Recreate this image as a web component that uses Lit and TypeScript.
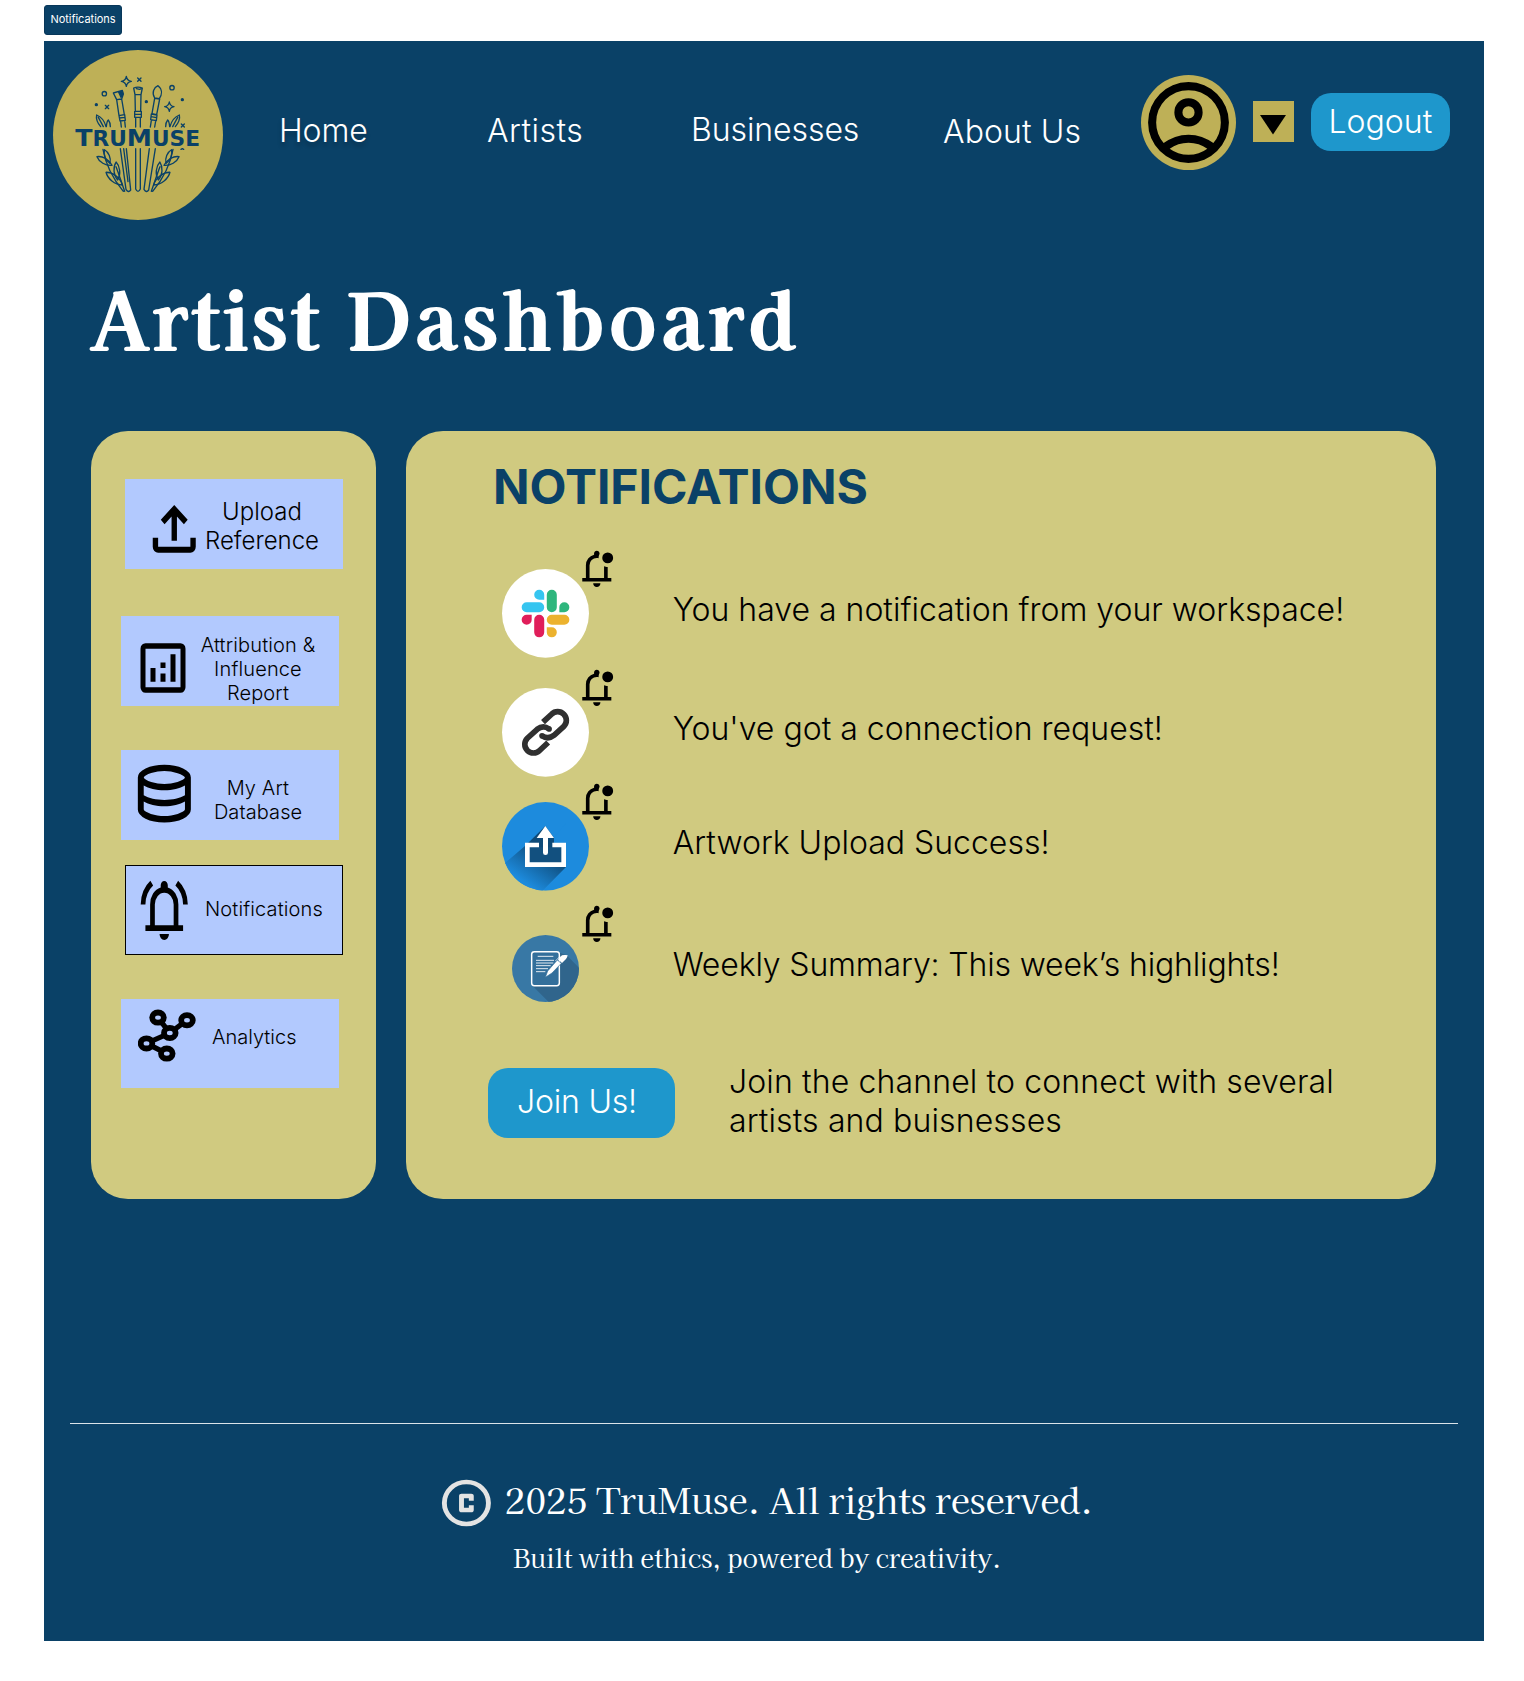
import { LitElement, html, css, svg } from "lit";
import { customElement } from "lit/decorators.js";

const PATHS: Record<string, string> = {
  account:
    "M234-276q51-39 114-61.5T480-360q69 0 132 22.5T726-276q35-41 54.5-93T800-480q0-133-93.5-226.5T480-800q-133 0-226.5 93.5T160-480q0 59 19.5 111t54.5 93Zm246-164q-59 0-99.5-40.5T340-580q0-59 40.5-99.5T480-720q59 0 99.5 40.5T620-580q0 59-40.5 99.5T480-440Zm0 360q-83 0-156-31.5T197-197q-54-54-85.5-127T80-480q0-83 31.5-156T197-763q54-54 127-85.5T480-880q83 0 156 31.5T763-763q54 54 85.5 127T880-480q0 83-31.5 156T763-197q-54 54-127 85.5T480-80Zm0-80q53 0 100-15.5t86-44.5q-39-29-86-44.5T480-280q-53 0-100 15.5T294-220q39 29 86 44.5T480-160Zm0-360q26 0 43-17t17-43q0-26-17-43t-43-17q-26 0-43 17t-17 43q0 26 17 43t43 17Z",
  upload:
    "M440-320v-326L336-542l-56-58 200-200 200 200-56 58-104-104v326h-80ZM240-160q-33 0-56.5-23.5T160-240v-120h80v120h480v-120h80v120q0 33-23.5 56.5T720-160H240Z",
  report:
    "M280-280h80v-200h-80v200Zm320 0h80v-400h-80v400Zm-160 0h80v-120h-80v120Zm0-200h80v-80h-80v80ZM200-120q-33 0-56.5-23.5T120-200v-560q0-33 23.5-56.5T200-840h560q33 0 56.5 23.5T840-760v560q0 33-23.5 56.5T760-120H200Zm0-80h560v-560H200v560Z",
  database:
    "M480-120q-151 0-255.5-46.5T120-280v-400q0-66 105.5-113T480-840q149 0 254.5 47T840-680v400q0 67-104.5 113.5T480-120Zm0-479q89 0 179-25.5T760-679q-11-29-100.5-55T480-760q-91 0-178.5 25.5T200-679q14 30 101.5 55T480-599Zm0 199q42 0 81-4t74.5-11.5q35.5-7.5 67-18.5t57.5-25v-120q-26 14-57.5 25t-67 18.5Q600-528 561-524t-81 4q-42 0-82-4t-75.5-11.5Q287-543 256-554t-56-25v120q25 14 56 25t66.5 18.5Q358-408 398-404t82 4Zm0 200q46 0 93.5-7t87.5-18.5q40-11.5 67-26t32-29.5v-98q-26 14-57.5 25t-67 18.5Q600-328 561-324t-81 4q-42 0-82-4t-75.5-11.5Q287-343 256-354t-56-25v99q5 15 31.5 29t66.5 25.5q40 11.5 88 18.5t94 7Z",
  bell:
    "M80-560q0-100 44.5-183.5T244-882l47 64q-60 44-95.5 111T160-560H80Zm720 0q0-80-35.5-147T669-818l47-64q75 55 119.5 138.5T880-560h-80ZM160-200v-80h80v-280q0-83 50-147.5T420-792v-28q0-25 17.5-42.5T480-880q25 0 42.5 17.5T540-820v28q80 20 130 84.5T720-560v280h80v80H160Zm320 120q-33 0-56.5-23.5T400-160h160q0 33-23.5 56.5T480-80ZM320-280h320v-280q0-66-47-113t-113-47q-66 0-113 47t-47 113v280Z",
  unread:
    "M160-200v-80h80v-280q0-83 50-147.5T420-792v-28q0-25 17.5-42.5T480-880q25 0 42.5 17.5T540-820v13q-11 22-16 45t-4 47q-10-2-19.5-3.5T480-720q-66 0-113 47t-47 113v280h320v-257q18 8 38.5 12.5T720-520v240h80v80H160Zm320 120q-33 0-56.5-23.5T400-160h160q0 33-23.5 56.5T480-80Zm240-520q-50 0-85-35t-35-85q0-50 35-85t85-35q50 0 85 35t35 85q0 50-35 85t-85 35Z",
  copyright:
    "M400-320h160q17 0 28.5-11.5T600-360v-80h-80v40h-80v-160h80v40h80v-80q0-17-11.5-28.5T560-640H400q-17 0-28.5 11.5T360-600v240q0 17 11.5 28.5T400-320Zm80 240q-83 0-156-31.5T197-197q-54-54-85.5-127T80-480q0-83 31.5-156T197-763q54-54 127-85.5T480-880q83 0 156 31.5T763-763q54 54 85.5 127T880-480q0 83-31.5 156T763-197q-54 54-127 85.5T480-80Zm0-80q134 0 227-93t93-227q0-134-93-227t-227-93q-134 0-227 93t-93 227q0 134 93 227t227 93Z",
};

const glyph = (name: string, cls: string) => html`
  <svg class=${cls} viewBox="0 -960 960 960" preserveAspectRatio="none" fill="currentColor">
    <path d=${PATHS[name]} />
  </svg>
`;

const NODES = [
  [158, 1017.6],
  [187, 1020.2],
  [169.8, 1033],
  [146.5, 1043.4],
  [166.8, 1053.6],
];

const network = html`
  <svg class="ico network" viewBox="138 1009 59 54" fill="none" stroke="#000">
    <path d="M158 1017.6L169.8 1033L187 1020.2M169.8 1033L146.5 1043.4L166.8 1053.6" stroke-width="5.2" />
    ${NODES.map(
      ([x, y]) => svg`<ellipse cx=${x} cy=${y} rx="5.8" ry="5.1" fill="#b2c9fe" stroke-width="5.8" />`
    )}
  </svg>
`;

// A slim leaf rooted at (x, y), pointing up before it is turned by a degrees.
const leaf = (x: number, y: number, a: number, l: number) =>
  svg`<path transform="translate(${x} ${y}) rotate(${a})" d=${`M0 0C${-l * 0.22} ${-l * 0.3} ${-l * 0.2} ${-l * 0.75} 0 ${-l}C${l * 0.2} ${-l * 0.75} ${l * 0.22} ${-l * 0.3} 0 0Z`} />`;

const sprig = svg`
  <path d="M219 448C228 500 252 540 280 574M284 574C272 540 266 520 258 500" />
  ${leaf(246, 496, -60, 52)} ${leaf(240, 490, -22, 44)} ${leaf(263, 540, -5, 54)} ${leaf(277, 555, -52, 62)}
  <path d="M212 380C202 368 198 354 200 345C212 350 224 364 228 380M205 352L220 380M229 380C230 370 232 362 235 360C240 366 241 372 241 380" />
`;

const brandMark = html`
  <svg class="brand" viewBox="69 150 510 510" role="img" aria-label="TruMuse">
    <circle cx="324" cy="405" r="255" fill="#beb057" />
    <g fill="none" stroke="#0a4167" stroke-width="4" stroke-linejoin="round" stroke-linecap="round">
      <path d="M289 229Q291 242 304 244Q291 246 289 259Q287 246 274 244Q287 242 289 229Z" />
      <path d="M418 306Q420 318 432 320Q420 322 418 334Q416 322 404 320Q416 318 418 306Z" />
      <path d="M323 234L333 244M333 234L323 244M226 316L236 326M236 316L226 326M454 372L463 381M463 372L454 381M453 448L457 446L461 448" />
      <circle cx="223" cy="281" r="6.5" /><circle cx="426" cy="263" r="6.5" />
      <circle cx="199" cy="314" r="3" fill="#0a4167" /><circle cx="349" cy="305" r="3" fill="#0a4167" />
      <circle cx="457" cy="299" r="3" fill="#0a4167" />
      <path d="M250 279L277 271L280 282L275 297L260 299ZM260 299L275 297L283 344L267 347ZM267 347L284 344L286 361L270 363ZM268 354L285 352M272 364L274 381M284 362L286 381" />
      <path d="M266 277L277 273L278 284L273 292Z" fill="#0a4167" />
      <path d="M311 264Q324 259 337 264L333 284H315ZM315 284H333L332 334H316ZM314 334H334V352H314ZM314 343H334M317 353V381M331 353V381" />
      <path d="M319 266L329 268L334 266" />
      <path d="M374 294C364 278 372 262 384 257C398 268 396 284 388 296ZM374 295L389 297L380 344L366 341ZM364 342L381 345L379 362L362 359ZM363 350L380 353M364 361L361 381M377 363L374 381" />
      <path d="M271 446L288 568Q295 580 302 570L289 446M281 446L294 545" />
      <path d="M317 446V567Q324 581 331 567V446" />
      <path d="M376 446L356 570Q349 580 342 568L358 446" />
      ${sprig}
      <g transform="matrix(-1 0 0 1 648 0)">${sprig}</g>
    </g>
    <text class="wordmark" x="136" y="437" textLength="374" lengthAdjust="spacingAndGlyphs">T<tspan class="sc">RU</tspan>M<tspan class="sc">USE</tspan></text>
  </svg>
`;

const slackIcon = html`
  <svg class="avatar" viewBox="0 0 261 266" preserveAspectRatio="none">
    <ellipse cx="130.5" cy="133" rx="130.5" ry="133" fill="#fff" />
    <g transform="translate(59 62) scale(5.96)">
      <path fill="#e01e5a" d="M5.042 15.165a2.528 2.528 0 0 1-2.52 2.523A2.528 2.528 0 0 1 0 15.165a2.527 2.527 0 0 1 2.522-2.52h2.52v2.52zM6.313 15.165a2.527 2.527 0 0 1 2.521-2.52 2.527 2.527 0 0 1 2.521 2.52v6.313A2.528 2.528 0 0 1 8.834 24a2.528 2.528 0 0 1-2.521-2.522v-6.313z" />
      <path fill="#36c5f0" d="M8.834 5.042a2.528 2.528 0 0 1-2.521-2.52A2.528 2.528 0 0 1 8.834 0a2.528 2.528 0 0 1 2.521 2.522v2.52H8.834zM8.834 6.313a2.528 2.528 0 0 1 2.521 2.521 2.528 2.528 0 0 1-2.521 2.521H2.522A2.528 2.528 0 0 1 0 8.834a2.528 2.528 0 0 1 2.522-2.521h6.312z" />
      <path fill="#2eb67d" d="M18.956 8.834a2.528 2.528 0 0 1 2.522-2.521A2.528 2.528 0 0 1 24 8.834a2.528 2.528 0 0 1-2.522 2.521h-2.522V8.834zM17.688 8.834a2.528 2.528 0 0 1-2.523 2.521 2.527 2.527 0 0 1-2.52-2.521V2.522A2.527 2.527 0 0 1 15.165 0a2.528 2.528 0 0 1 2.523 2.522v6.312z" />
      <path fill="#ecb22e" d="M15.165 18.956a2.528 2.528 0 0 1 2.523 2.522A2.528 2.528 0 0 1 15.165 24a2.527 2.527 0 0 1-2.52-2.522v-2.522h2.52zM15.165 17.688a2.527 2.527 0 0 1-2.52-2.523 2.526 2.526 0 0 1 2.52-2.52h6.313A2.527 2.527 0 0 1 24 15.165a2.528 2.528 0 0 1-2.522 2.523h-6.313z" />
    </g>
  </svg>
`;

const linkHalf = "M219 846.5L244.6 822.6A26 26 0 0 1 281.4 859.4L252 886Q234 900 216 887";
const linkIcon = html`
  <svg class="avatar" viewBox="96 744 261 266" preserveAspectRatio="none">
    <ellipse cx="226.5" cy="877" rx="130.5" ry="133" fill="#fff" />
    <g fill="none" stroke="#303030" stroke-width="17">
      <path d=${linkHalf} />
      <path d=${linkHalf} transform="rotate(180 226.7 877)" />
      <g fill="#303030" stroke="none"><circle cx="216" cy="887" r="8.4" /><circle cx="237.4" cy="867" r="8.4" /></g>
    </g>
  </svg>
`;

const shareIcon = html`
  <svg class="avatar" viewBox="96 96 261 266" preserveAspectRatio="none">
    <defs>
      <clipPath id="disc"><ellipse cx="226.5" cy="229" rx="130.5" ry="133" /></clipPath>
      <linearGradient id="fade" gradientUnits="userSpaceOnUse" x1="226" y1="240" x2="160" y2="335">
        <stop offset="0" stop-color="#0e4a78" /><stop offset="1" stop-color="#1d8bdd" />
      </linearGradient>
    </defs>
    <g clip-path="url(#disc)">
      <path d="M96 96H357V362H96Z" fill="#1d8bdd" />
      <path d="M226 168L165 228L92 290L130 380H200L288 291V218H252V203Z" fill="url(#fade)" />
      <path d="M252 203V218H288V160Z" fill="#1d8bdd" />
      <path d="M179 232H274V277H179Z" fill="#12507f" />
    </g>
    <path d="M207 225H172V284H281V225H247" fill="none" stroke="#fff" stroke-width="14" />
    <path d="M226 168L252 204H234V248Q234 255 226.5 255Q219 255 219 248V204H200Z" fill="#fff" />
  </svg>
`;

const noteIcon = html`
  <svg class="avatar small" viewBox="126 495 201 201">
    <defs><clipPath id="dot"><circle cx="226.5" cy="595.5" r="100.5" /></clipPath></defs>
    <g clip-path="url(#dot)">
      <path d="M126 495H327V696H126Z" fill="#3878a5" />
      <path d="M290 556L340 606V700H240L186 646L268 548Z" fill="#30658c" />
    </g>
    <rect x="185" y="545" width="83" height="102" rx="8" fill="#336f9b" stroke="#fff" stroke-width="4.4" />
    <path d="M203 559H250M198 571H252M198 579H250M198 587H242M198 596H234M198 605H226" stroke="#fff" stroke-width="2.6" fill="none" />
    <path d="M226 622L233 603L262 570L274 580L246 609Z" fill="#fff" stroke="#336f9b" stroke-width="2" />
    <path d="M264 568L276 556Q282 554 287 555L293 556Q292 562 288 567L276 579Z" fill="#fff" />
    <path d="M256 573L271 558" stroke="#fff" stroke-width="2" />
  </svg>
`;

const MENU = [
  { cls: "up", icon: glyph("upload", "ico upload"), lines: ["Upload", "Reference"] },
  { cls: "attr", icon: glyph("report", "ico report"), lines: ["Attribution &", "Influence", "Report"] },
  { cls: "db", icon: glyph("database", "ico database"), lines: ["My Art", "Database"] },
  { cls: "notif", icon: glyph("bell", "ico ring"), lines: ["Notifications"] },
  { cls: "stats", icon: network, lines: ["Analytics"] },
];

const FEED = [
  { cls: "r1", icon: slackIcon, text: "You have a notification from your workspace!" },
  { cls: "r2", icon: linkIcon, text: "You've got a connection request!" },
  { cls: "r3", icon: shareIcon, text: "Artwork Upload Success!" },
  { cls: "r4", icon: noteIcon, text: "Weekly Summary: This week’s highlights!" },
];

@customElement("app-root")
export class AppRoot extends LitElement {
  static styles = css`
    :host {
      display: block;
      box-sizing: border-box;
      width: 1524px;
      height: 1681px;
      padding: 5px 40px 0 44px;
      background: #fff;
      font-family: Inter, "Liberation Sans", sans-serif;
      font-weight: 300;
    }
    * { box-sizing: border-box; }
    svg { display: block; flex: none; }
    .tag {
      width: 78px; height: 30px; border-radius: 3px; border: 1px solid #08375a;
      background: #0a4167; color: #fff; font: 400 11px/27px Inter, "Liberation Sans", sans-serif;
      text-align: center; letter-spacing: -0.03px;
    }
    .page { margin-top: 6px; width: 1440px; height: 1600px; background: #0a4167; color: #fff; display: flex; flex-direction: column; }
    header { display: flex; align-items: flex-start; height: 179px; padding-left: 9px; font-size: 32px; line-height: 39px; }
    .brand { width: 170px; height: 170px; margin-top: 9px; }
    .wordmark { font: 700 71px "DejaVu Sans", sans-serif; fill: #0a4167; }
    .wordmark .sc { font-size: 61px; }
    nav { display: flex; margin-left: 56px; width: 861.5px; letter-spacing: 0.1px; }
    nav span { white-space: nowrap; }
    .home { width: 208px; margin-top: 70px; letter-spacing: -0.1px; text-shadow: 0 4px 4px rgba(0, 0, 0, 0.25); }
    .artists { width: 204px; margin-top: 70px; letter-spacing: 0.5px; }
    .business { width: 252px; margin-top: 69px; letter-spacing: -0.08px; }
    .about { margin-top: 71px; }
    .user { width: 95px; height: 95px; margin-top: 34px; border-radius: 50%; background: #beb057; color: #000; display: grid; place-content: center; }
    .account { width: 97px; height: 97px; }
    .toggle { width: 41px; height: 41px; margin: 60px 17px 0; background: #beb057; padding: 14px 0 0 7px; }
    .toggle svg { width: 26px; height: 20px; }
    .logout { width: 139px; height: 58px; margin-top: 52px; border-radius: 20px; background: #1e97cc; padding: 9px 0 0 18px; }
    h1 {
      display: flex; gap: 25px;
      margin: 0; padding: 46.4px 0 0 46px; height: 211px; white-space: nowrap;
      font: 700 77.5px/100px "Kaisei Tokumin", "Noto Serif CJK JP", serif;
      letter-spacing: 3.1px; -webkit-text-stroke: 1.9px #fff;
    }
    h1 .wide { letter-spacing: 5px; }
    .cols { display: flex; padding-left: 47px; gap: 30px; height: 768px; color: #000; }
    aside { width: 285px; border-radius: 37px; background: #d0ca80; padding: 48px 0 0 30px; display: flex; flex-direction: column; }
    .card { width: 218px; height: 89.5px; background: #b2c9fe; display: flex; align-items: flex-start; font-size: 20px; line-height: 24px; text-align: center; }
    .label { display: flex; flex-direction: column; white-space: nowrap; }
    .up { margin: 0 0 47.5px 4px; font-size: 24px; line-height: 29px; }
    .attr { margin-bottom: 44.5px; }
    .db { margin-bottom: 25.5px; }
    .notif { margin: 0 0 44px 4px; border: 1px solid #000; }
    .ico { color: #000; }
    .upload { width: 64.5px; height: 71.6px; margin: 14px 0 0 17.2px; }
    .up .label { margin: 18px 0 0 -1.7px; width: 114px; }
    .report { width: 60px; height: 66px; margin: 19px 0 0 12.3px; }
    .attr .label { margin: 17px 0 0 5.7px; width: 118px; letter-spacing: 0.14px; }
    .database { width: 70.7px; height: 77px; margin: 5px 0 0 8.2px; }
    .db .label { margin: 26px 0 0 14px; width: 88px; letter-spacing: 0.1px; }
    .ring { width: 56.5px; height: 70.8px; margin: 9px 0 0 10.3px; }
    .notif .label { margin: 31px 0 0 12.2px; letter-spacing: 0.14px; }
    .network { width: 59px; height: 54px; margin: 10px 0 0 17px; }
    .stats .label { margin: 26px 0 0 15px; }
    .panel { width: 1030px; border-radius: 37px; background: #d0ca80; padding: 27px 0 0 82px; display: flex; flex-direction: column; }
    h2 { margin: 0 0 35px 5px; font: 700 48px/58px Inter, "Liberation Sans", sans-serif; letter-spacing: -0.05px; color: #0a4167; }
    .row { display: flex; align-items: flex-start; padding-left: 14px; height: 119px; font-size: 32px; line-height: 39px; white-space: nowrap; }
    .who { position: relative; width: 87px; padding-top: 18px; margin-right: 83.7px; }
    .avatar { width: 87px; height: 88.7px; }
    .avatar.small { width: 67px; height: 67px; margin: 11px 0 0 10px; }
    .unread { position: absolute; left: 73.4px; top: -3.6px; width: 43.6px; height: 43.6px; }
    .row p { margin: 39px 0 0; }
    .r2 { height: 114px; }
    .r3 { height: 122px; }
    .r4 { height: 156px; letter-spacing: -0.15px; }
    .join { display: flex; font-size: 32px; line-height: 39px; }
    .cta { width: 187px; height: 70px; margin: 6px 54px 0 0; border-radius: 20px; background: #1e97cc; color: #fff; padding: 14px 0 0 29px; letter-spacing: -0.2px; }
    .join p { margin: 0; letter-spacing: 0.13px; }
    footer { margin: 224px 26px 0 26px; border-top: 1px solid #dbe3e9; font-family: "Kaisei Tokumin", "Noto Serif CJK JP", serif; font-weight: 400; }
    .legal { display: flex; padding: 50px 0 0 367px; height: 115px; font-size: 35px; line-height: 50px; white-space: nowrap; }
    .copy { width: 58.8px; height: 56px; color: #e3e3e3; margin: 0.5px 9px 0 0; }
    .motto { padding-left: 443px; font-size: 25px; line-height: 36px; white-space: nowrap; }
  `;

  render() {
    return html`
      <div class="tag">Notifications</div>
      <main class="page">
        <header>
          ${brandMark}
          <nav>
            <span class="home">Home</span>
            <span class="artists">Artists</span>
            <span class="business">Businesses</span>
            <span class="about">About Us</span>
          </nav>
          <div class="user">${glyph("account", "account")}</div>
          <div class="toggle"><svg viewBox="0 0 26 20"><path d="M0 0H26L13 19.5Z" /></svg></div>
          <div class="logout">Logout</div>
        </header>
        <h1><span>Artist</span> <span class="wide">Dashboard</span></h1>
        <div class="cols">
          <aside>
            ${MENU.map(
              (m) => html`<div class="card ${m.cls}">
                ${m.icon}
                <div class="label">${m.lines.map((l) => html`<span>${l}</span>`)}</div>
              </div>`
            )}
          </aside>
          <section class="panel">
            <h2>NOTIFICATIONS</h2>
            ${FEED.map(
              (n) => html`<div class="row ${n.cls}">
                <div class="who">${n.icon}${glyph("unread", "unread")}</div>
                <p>${n.text}</p>
              </div>`
            )}
            <div class="join">
              <div class="cta">Join Us!</div>
              <p>Join the channel to connect with several<br />artists and buisnesses</p>
            </div>
          </section>
        </div>
        <footer>
          <div class="legal">${glyph("copyright", "copy")}<span>2025 TruMuse. All rights reserved.</span></div>
          <div class="motto">Built with ethics, powered by creativity.</div>
        </footer>
      </main>
    `;
  }
}
